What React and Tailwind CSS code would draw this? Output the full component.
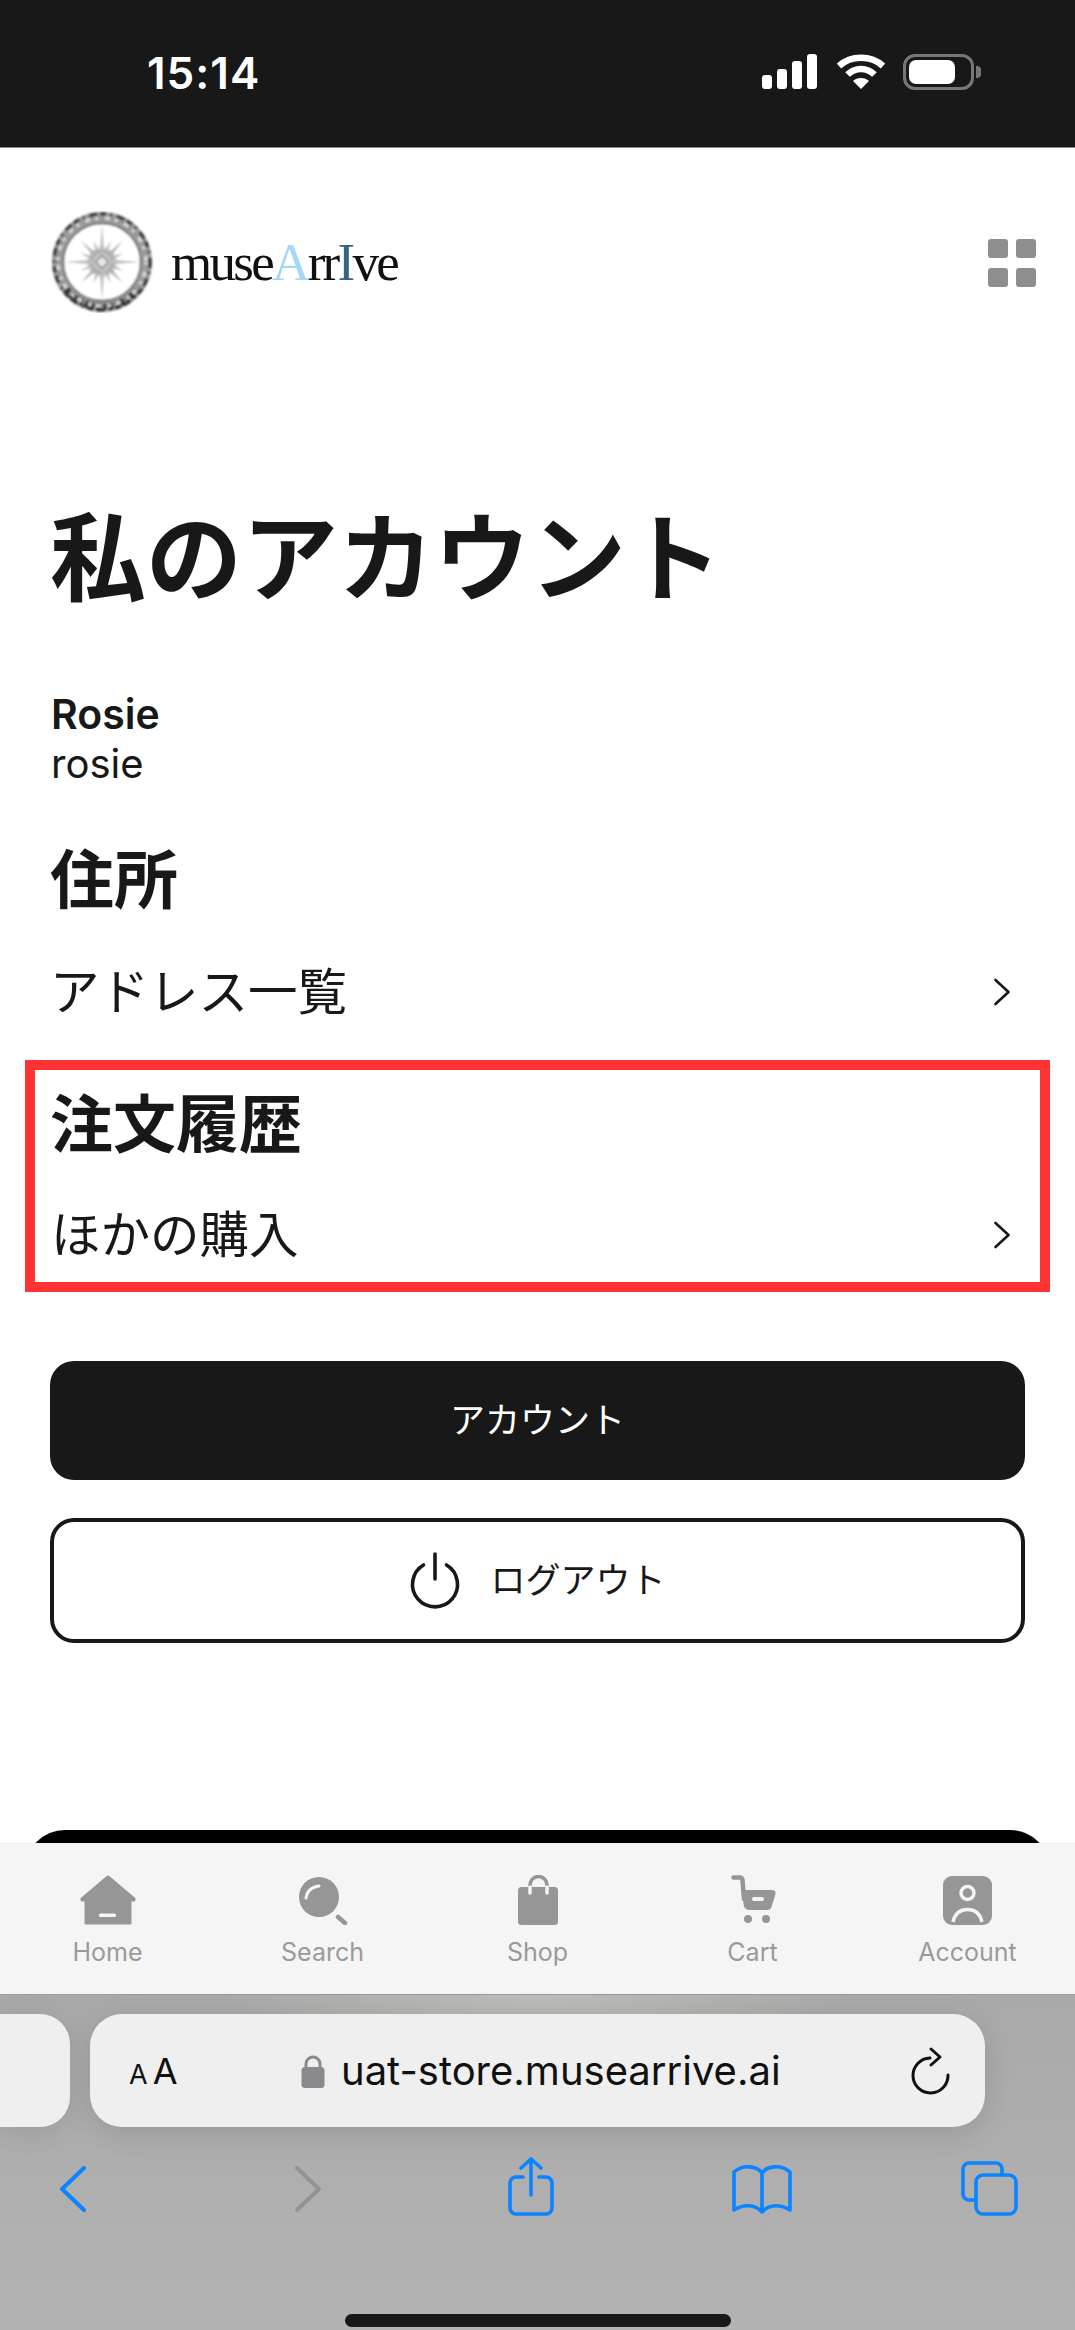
import React from 'react';

const GRAY = '#969696';
const LIGHT = '#f5f5f5';
const BLUE = '#0a84ff';

// compass points of the logo, long and short alternate
const STAR = Array.from({ length: 32 }, (_, i) => {
  const long = i % 8 === 0 ? 38 : i % 4 === 0 ? 30 : i % 2 === 0 ? 23 : 16;
  return { angle: i * 11.25, long };
});

function LogoMark() {
  return (
    <svg width="104" height="102" viewBox="0 0 104 102">
      <defs>
        <filter id="soft">
          <feGaussianBlur stdDeviation="0.8" />
        </filter>
      </defs>
      <g filter="url(#soft)">
        <circle cx="52" cy="51" r="44.5" fill="none" stroke="#9a9a9a" strokeWidth="11" />
        <circle cx="52" cy="51" r="48" fill="none" stroke="#3a3a3a" strokeWidth="3.5" strokeDasharray="6 4 2 5 8 3" />
        <path d="M16 78 A45 45 0 0 0 88 78" fill="none" stroke="#333" strokeWidth="7" strokeDasharray="5 2 3 2" />
        <circle cx="52" cy="51" r="44" fill="none" stroke="#dcdcdc" strokeWidth="3" strokeDasharray="3 7 5 5" />
        <circle cx="52" cy="51" r="38.5" fill="#fff" stroke="#555" strokeWidth="1.4" />
        {STAR.map((s) => (
          <polygon
            key={s.angle}
            points={`52,${51 - s.long} 54.5,45 49.5,45`}
            fill={s.long > 30 ? '#bdbdbd' : '#b0b0b0'}
            transform={`rotate(${s.angle} 52 51)`}
          />
        ))}
        <circle cx="52" cy="51" r="9" fill="#c4c4c4" />
        <rect x="47.5" y="46.5" width="9" height="9" fill="#e6e6e6" stroke="#8c8c8c" strokeWidth="1.5" transform="rotate(45 52 51)" />
      </g>
    </svg>
  );
}

function GridIcon() {
  return (
    <svg width="48" height="48" viewBox="0 0 48 48" fill="#8e8e8e">
      <rect x="0" y="0" width="20" height="19" rx="3" />
      <rect x="28" y="0" width="20" height="19" rx="3" />
      <rect x="0" y="29" width="20" height="19" rx="3" />
      <rect x="28" y="29" width="20" height="19" rx="3" />
    </svg>
  );
}

function Chevron() {
  return (
    <svg width="18" height="28" viewBox="0 0 18 28" fill="none" stroke="#181818" strokeWidth="2.6" strokeLinecap="round" strokeLinejoin="round">
      <path d="M2.5 2 L15.5 14 L2.5 26" />
    </svg>
  );
}

function PowerIcon() {
  return (
    <svg width="52" height="57" viewBox="0 0 52 57" fill="none" stroke="#181818" strokeWidth="3.6" strokeLinecap="round">
      <path d="M14.5 13 A22.5 22.5 0 1 0 37.5 13" />
      <path d="M26 2 V27" />
    </svg>
  );
}

function HomeIcon() {
  return (
    <svg width="56" height="50" viewBox="0 0 56 50">
      <path d="M28 2 L54 24 V25 H50 V48 H6 V25 H2 V24 Z" fill={GRAY} stroke={GRAY} strokeWidth="3" strokeLinejoin="round" />
      <rect x="19" y="38.5" width="17" height="3.5" rx="1.5" fill={LIGHT} />
    </svg>
  );
}

function SearchIcon() {
  return (
    <svg width="50" height="50" viewBox="0 0 50 50" fill="none">
      <circle cx="21" cy="22" r="20" fill={GRAY} />
      <path d="M8 23 C9 16 14 12 21 11" stroke={LIGHT} strokeWidth="3" strokeLinecap="round" />
      <path d="M40 42 L47 48" stroke={GRAY} strokeWidth="4.5" strokeLinecap="round" />
    </svg>
  );
}

function ShopIcon() {
  return (
    <svg width="40" height="50" viewBox="0 0 40 50" fill="none">
      <rect x="0" y="12" width="40" height="38" rx="3.5" fill={GRAY} />
      <path d="M12 12 V10 A8.5 8.5 0 0 1 29 10 V12" stroke={GRAY} strokeWidth="3.5" />
      <path d="M12 12 V18 M29 12 V18" stroke={LIGHT} strokeWidth="3.5" strokeLinecap="round" />
    </svg>
  );
}

function CartIcon() {
  return (
    <svg width="46" height="50" viewBox="0 0 46 50" fill="none">
      <path d="M3.5 2.5 H9.5 Q12 2.5 12.5 5 L14 24" stroke={GRAY} strokeWidth="4.5" strokeLinecap="round" strokeLinejoin="round" />
      <path d="M12 15 H42 Q46 15 45.5 19 L41.5 32 Q40.5 35 37 35 H20 Q14 35 13.5 29 Z" fill={GRAY} />
      <rect x="22" y="22" width="12" height="4" rx="2" fill={LIGHT} />
      <circle cx="18" cy="44" r="4" fill={GRAY} />
      <circle cx="36" cy="44" r="4" fill={GRAY} />
    </svg>
  );
}

function AccountIcon() {
  return (
    <svg width="49" height="49" viewBox="0 0 49 49" fill="none">
      <rect width="49" height="49" rx="9" fill={GRAY} />
      <circle cx="24.5" cy="17" r="6.5" stroke={LIGHT} strokeWidth="3.5" />
      <path d="M10 46 C12 37 18 33.5 24.5 33.5 C31 33.5 37 37 39 46" stroke={LIGHT} strokeWidth="3.5" />
    </svg>
  );
}

function LockIcon() {
  return (
    <svg width="24" height="34" viewBox="0 0 24 34" fill="none">
      <path d="M5 15 V10 A7 7 0 0 1 19 10 V15" stroke="#8a8a8e" strokeWidth="3" />
      <rect x="0.5" y="13" width="23" height="21" rx="3.5" fill="#8a8a8e" />
    </svg>
  );
}

function ReloadIcon() {
  return (
    <svg width="42" height="50" viewBox="0 0 42 50" fill="none" stroke="#111" strokeWidth="3" strokeLinecap="round" strokeLinejoin="round">
      <path d="M20 12 A17.5 17.5 0 1 0 38 29" />
      <path d="M21 3 L30 11 L21 19" />
    </svg>
  );
}

function ShareIcon() {
  return (
    <svg width="50" height="62" viewBox="0 0 50 62" fill="none" stroke={BLUE} strokeWidth="3.6" strokeLinecap="round" strokeLinejoin="round">
      <path d="M17 21 H10 A6 6 0 0 0 4 27 V52 A6 6 0 0 0 10 58 H40 A6 6 0 0 0 46 52 V27 A6 6 0 0 0 40 21 H33" />
      <path d="M25 3 V39" />
      <path d="M15 12 L25 3 L35 12" />
    </svg>
  );
}

function BookIcon() {
  return (
    <svg width="62" height="52" viewBox="0 0 62 52" fill="none" stroke={BLUE} strokeWidth="3.6" strokeLinecap="round" strokeLinejoin="round">
      <path d="M31 10 C26 3 12 1 3 9 V47 C12 41 24 41 31 49 C38 41 50 41 59 47 V9 C50 1 36 3 31 10 V49" />
    </svg>
  );
}

function TabsIcon() {
  return (
    <svg width="60" height="58" viewBox="0 0 60 58" fill="none" stroke={BLUE} strokeWidth="3.6" strokeLinecap="round" strokeLinejoin="round">
      <rect x="17" y="16" width="40" height="39" rx="7" />
      <path d="M43 16 V10 A6 6 0 0 0 37 4 H10 A6 6 0 0 0 4 10 V35 A6 6 0 0 0 10 41 H17" />
    </svg>
  );
}

function NavArrow({ back, color }) {
  return (
    <svg width="30" height="48" viewBox="0 0 30 48" fill="none" stroke={color} strokeWidth="4" strokeLinecap="round" strokeLinejoin="round">
      <path d={back ? 'M26 3 L4 24 L26 45' : 'M4 3 L26 24 L4 45'} />
    </svg>
  );
}

const TABS = [
  { label: 'Home', icon: <HomeIcon /> },
  { label: 'Search', icon: <SearchIcon /> },
  { label: 'Shop', icon: <ShopIcon /> },
  { label: 'Cart', icon: <CartIcon /> },
  { label: 'Account', icon: <AccountIcon /> },
];

function StatusBar() {
  return (
    <div className="h-[148px] shrink-0 bg-[#181818] border-b border-[#8a8a8a] flex items-start justify-between pl-[147px] pr-[94px] pt-[50px]">
      <span className="text-white text-[44px] leading-[46px] font-semibold tracking-[1px]">15:14</span>
      <div className="flex items-start gap-[18px] pt-[4px]">
        <svg width="56" height="36" viewBox="0 0 56 36" fill="#fff">
          <rect x="0" y="21" width="10" height="14" rx="3" />
          <rect x="15" y="15" width="10" height="20" rx="3" />
          <rect x="30" y="7" width="10" height="28" rx="3" />
          <rect x="45" y="0" width="10" height="35" rx="3" />
        </svg>
        <svg width="50" height="36" viewBox="0 0 50 36" fill="none" stroke="#fff" strokeWidth="6.5">
          <path d="M3 12 C15 1 35 1 47 12" />
          <path d="M11.5 20.5 C19 13 31 13 38.5 20.5" />
          <path d="M25 35 L17 27 C21 23 29 23 33 27 Z" fill="#fff" stroke="none" />
        </svg>
        <div className="flex items-center gap-[2px] -ml-[1px]">
          <div className="w-[71px] h-[36px] rounded-[12px] border-[3px] border-[#777777] p-[3px] pr-[16px]">
            <div className="w-full h-full bg-white rounded-[7px]" />
          </div>
          <div className="w-[5px] h-[12px] bg-[#777777] rounded-r-[4px]" />
        </div>
      </div>
    </div>
  );
}

function LinkRow({ label }) {
  return (
    <div className="flex items-center justify-between pr-[14px]">
      <span className="text-[49.5px] leading-[64px] font-normal">{label}</span>
      <Chevron />
    </div>
  );
}

function TabBar() {
  return (
    <div className="h-[151px] shrink-0 bg-[#f5f5f5] border-t border-[#eeeeee] grid grid-cols-5">
      {TABS.map((tab) => (
        <div key={tab.label} className="flex flex-col items-center pt-[31px]">
          <div className="h-[50px] flex items-center justify-center">{tab.icon}</div>
          <span className="mt-[11px] text-[25px] leading-[32px] text-[#9a9a9a]">{tab.label}</span>
        </div>
      ))}
    </div>
  );
}

function SafariBar() {
  return (
    <div className="flex-1 flex flex-col border-t border-[#9a9a9a] bg-[radial-gradient(ellipse_320px_70px_at_50%_0,#bdbdb9,transparent),linear-gradient(#a9a9a9,#b3b3b3)]">
      <div className="flex gap-[20px] mt-[19px] h-[113px]">
        <div className="w-[70px] bg-[#efefef] rounded-r-[30px] shadow-[0_6px_30px_rgba(0,0,0,0.1)]" />
        <div className="w-[895px] bg-[#efefef] rounded-[32px] shadow-[0_6px_30px_rgba(0,0,0,0.12)] flex items-center pl-[39px] pr-[33px]">
          <span className="w-[172px] flex items-baseline gap-[5px] text-[#111] leading-none">
            <span className="text-[27px]">A</span>
            <span className="text-[36px]">A</span>
          </span>
          <LockIcon />
          <span className="ml-[16px] flex-1 text-[40px] leading-[50px] text-[#111]">uat-store.musearrive.ai</span>
          <ReloadIcon />
        </div>
      </div>
      <div className="flex items-start pl-[58px] mt-[24px] h-[70px]">
        <div className="mt-[14px] w-[235px]"><NavArrow back color={BLUE} /></div>
        <div className="mt-[14px] w-[213px]"><NavArrow color="#939393" /></div>
        <div className="mt-[5px] w-[225px]"><ShareIcon /></div>
        <div className="mt-[12px] w-[228px]"><BookIcon /></div>
        <div className="mt-[8px]"><TabsIcon /></div>
      </div>
      <div className="flex justify-center mt-[93px]">
        <div className="w-[386px] h-[13px] rounded-full bg-[#181818]" />
      </div>
    </div>
  );
}

export default function App() {
  return (
    <div className="w-[1075px] h-[2330px] flex flex-col overflow-hidden bg-white text-[#181818] font-['Inter','Noto_Sans_CJK_JP',sans-serif]">
      <StatusBar />

      <div className="h-[1695px] shrink-0 overflow-hidden flex flex-col">
        {/* logo row */}
        <div className="flex items-start justify-between pl-[50px] pr-[39px] pt-[63px]">
          <div className="flex items-center gap-[17px]">
            <LogoMark />
            <span className="font-['Liberation_Serif',serif] text-[53px] leading-[60px] tracking-[-2.7px] text-[#111]">
              muse<span className="text-[#a5d8f6]">A</span>rr<span className="text-[#35657f]">I</span>ve
            </span>
          </div>
          <div className="pt-[28px]"><GridIcon /></div>
        </div>

        <div className="px-[50px]">
          <h1 className="mt-[185px] text-[96px] leading-[120px] font-bold">私のアカウント</h1>
          <p className="mt-[72px] pl-[1px] text-[41px] leading-[49px] font-semibold">Rosie</p>
          <p className="pl-[1px] text-[40px] leading-[49px] font-normal">rosie</p>
          <h2 className="mt-[52px] text-[64px] leading-[80px] font-bold">住所</h2>
          <div className="mt-[40px]"><LinkRow label="アドレス一覧" /></div>
        </div>

        {/* highlighted section */}
        <div className="mt-[36px] mx-[25px] h-[232px] shrink-0 border-[10px] border-[#ff3333] pl-[15px] pr-[15px] pt-[14px]">
          <h2 className="text-[63px] leading-[80px] font-bold">注文履歴</h2>
          <div className="mt-[39px] pl-[1px]"><LinkRow label="ほかの購入" /></div>
        </div>

        <div className="px-[50px]">
          <div className="mt-[69px] h-[119px] rounded-[24px] bg-[#181818] text-white text-[35px] flex items-center justify-center">
            アカウント
          </div>
          <div className="mt-[38px] h-[125px] rounded-[24px] border-[4px] border-[#181818] text-[35px] flex items-center justify-center gap-[29px]">
            <PowerIcon />
            <span>ログアウト</span>
          </div>
        </div>

        <div className="mt-[187px] mx-[25px] h-[40px] shrink-0 rounded-t-[46px] bg-black" />
      </div>

      <TabBar />
      <SafariBar />
    </div>
  );
}
